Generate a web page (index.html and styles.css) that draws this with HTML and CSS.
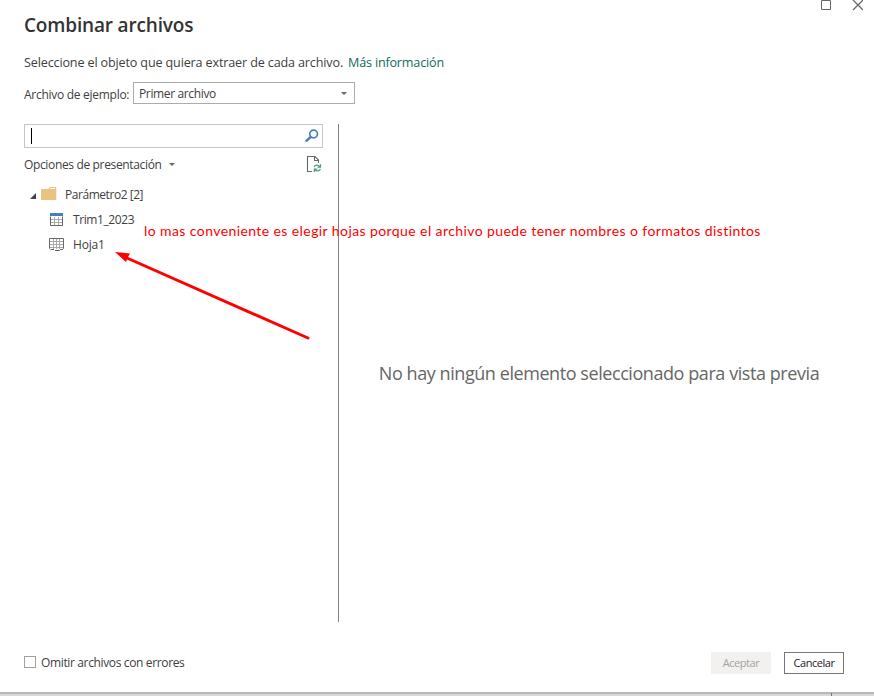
FILE: index.html
```
<!DOCTYPE html>
<html lang="es">
<head>
<meta charset="utf-8">
<title>Combinar archivos</title>
<link rel="stylesheet" href="styles.css">
</head>
<body>
<main class="dialog">
  <div class="window-controls">
    <svg width="42" height="12" viewBox="0 0 42 12" fill="none" stroke="#666">
      <path d="M.5 .5h9v9h-9z"/>
      <path d="M32 0l10 10M42 0L32 10" stroke-width="1.3"/>
    </svg>
  </div>
  <header class="header">
    <h1><span class="t-title">Combinar archivos</span></h1>
    <p class="intro"><span class="t-intro">Seleccione el objeto que quiera extraer de cada archivo.</span><a class="t-link">Más información</a></p>
    <div class="sample">
      <label class="t-label">Archivo de ejemplo:</label>
      <div class="select"><span class="t-select">Primer archivo</span><i class="caret"></i></div>
    </div>
  </header>
  <div class="content">
    <aside class="sidebar">
      <div class="search">
        <i class="cursor"></i>
        <svg width="14" height="14" viewBox="0 0 14 14" fill="none" stroke="#4a7fbd">
          <circle cx="8.6" cy="5" r="3.9" stroke-width="1.7"/>
          <path d="M5.7 8L1.4 11.8" stroke-width="2.4" stroke-linecap="round"/>
        </svg>
      </div>
      <div class="options">
        <span class="t-options">Opciones de presentación</span><i class="caret"></i>
        <svg class="refresh" width="16" height="18" viewBox="0 0 16 18" fill="none">
          <path d="M6 16.5H1.5V1.5H9L12.5 5V8M8.5 1.5V5.5H12.5" stroke="#666" stroke-width="1.1"/>
          <path d="M8.2 12C8.7 9.9 12 9.3 13.7 11.4M14.5 9.2V12H11.5M14.4 13.8C13.7 16.2 10.6 16.6 9 14.6M8.4 17V14.1H11.3" stroke="#4f9c7c" stroke-width="1.25"/>
        </svg>
      </div>
      <div class="node root">
        <svg class="expand" width="6" height="6" viewBox="0 0 6 6"><path d="M6 0v6H0z" fill="#444"/></svg>
        <svg class="folder" width="16" height="14" viewBox="0 0 16 14"><path d="M0 2h7.5L9 0h6v2h.3v11H0z" fill="#eac282"/><path d="M9 2h5V1H9.7z" fill="#fff"/></svg>
        <span class="t-root">Parámetro2 [2]</span>
      </div>
      <div class="node">
        <svg width="15" height="13" viewBox="0 0 15 13" fill="none"><path d="M2 6.5h11M2 9.5h11M5.5 4v8M9.5 4v8" stroke="#aaa"/><path d="M1.5 3.5v9h12v-9" stroke="#666"/><path d="M1 0h13v3H1z" fill="#4580ba"/></svg>
        <span class="t-table">Trim1_2023</span>
      </div>
      <div class="node">
        <svg width="15" height="13" viewBox="0 0 15 13" fill="none"><path d="M1 3.5h13M1 6.5h13M1 9.5h13M4.5 1v10M7.5 1v10M10.5 1v10" stroke="#aaa"/><path d="M1.5 11.5L.5 10.5V.5h14v10l-1 1M2 11.5h3M6 12.5h5M11 11.5h3" stroke="#686868"/></svg>
        <span class="t-sheet">Hoja1</span>
      </div>
    </aside>
    <section class="preview"><span class="t-empty">No hay ningún elemento seleccionado para vista previa</span></section>
  </div>
  <footer class="footer">
    <i class="checkbox"></i><span class="t-check">Omitir archivos con errores</span>
    <div class="actions">
      <div class="button disabled"><span class="t-accept">Aceptar</span></div>
      <div class="button"><span class="t-cancel">Cancelar</span></div>
    </div>
  </footer>
  <div class="edge"><i></i></div>
  <span class="note">lo mas conveniente es elegir hojas porque el archivo puede tener nombres o formatos distintos</span>
  <svg class="arrow" width="200" height="96" viewBox="0 0 200 96"><path d="M12 7L193 87" stroke="#f00" stroke-width="3" stroke-linecap="round"/><path d="M0 1L15 2.5L12.5 7L11 11z" fill="#f00"/></svg>
</main>
</body>
</html>
```
FILE: styles.css
```
* { box-sizing: border-box; }
body { margin: 0; background: #fff; color: #404040; font: 12px/20px "Open Sans", "Noto Sans", sans-serif; }
h1, p { margin: 0; }
span, label, a { white-space: nowrap; }
svg { display: block; flex: none; }
.dialog { position: relative; width: 874px; height: 696px; overflow: hidden; display: flex; flex-direction: column; }
.window-controls { height: 12px; display: flex; justify-content: flex-end; padding-right: 11px; }
.header { height: 112px; padding: 0 24px; }
h1 { font-size: 19px; line-height: 26px; font-weight: 600; color: #333; letter-spacing: -.17px; }
.intro { display: flex; margin-top: 14px; padding-top: 1px; height: 20px; font-size: 12.6px; letter-spacing: -.15px; }
.t-intro { width: 324px; }
.intro a { color: #106b5b; letter-spacing: -.18px; }
.sample { display: flex; align-items: center; height: 22px; margin-top: 10px; }
.sample label { width: 109px; padding-top: 3px; letter-spacing: -.28px; }
.select { width: 222px; height: 22px; border: 1px solid #ababab; display: flex; align-items: center; justify-content: space-between; padding: 0 7px 0 5px; }
.t-select { padding-top: 2px; letter-spacing: -.36px; }
.caret { border: 3px solid transparent; border-top-color: #666; border-bottom: 0; }
.content { height: 498px; padding-left: 24px; display: flex; }
.sidebar { width: 315px; border-right: 1px solid #838383; padding-right: 15px; }
.search { height: 24px; border: 1px solid #c6c6c6; display: flex; align-items: center; justify-content: space-between; padding: 0 3px 0 6px; }
.cursor { width: 1px; height: 16px; background: #000; }
.options { height: 34px; display: flex; align-items: center; }
.t-options { width: 145px; letter-spacing: -.35px; }
.options .caret { margin-top: -2px; }
.refresh { margin: -2px 1px 0 auto; }
.node { height: 25px; display: flex; align-items: center; gap: 9px; padding-left: 25px; }
.root { padding-left: 6px; gap: 5px; }
.root .t-root { margin-left: 3px; letter-spacing: -.45px; }
.t-table { letter-spacing: -.4px; }
.t-sheet { letter-spacing: -.2px; }
.expand { margin-top: 3px; }
.folder { margin-top: -1px; }
.preview { flex: 1; display: flex; align-items: center; justify-content: center; padding-right: 15px; font-size: 18px; color: #666; letter-spacing: -.43px; }
.footer { height: 70px; padding: 30px 30px 0 24px; display: flex; align-items: flex-start; }
.checkbox { width: 12px; height: 12px; border: 1px solid #a0a0a0; margin: 4px 5px 0 0; }
.t-check { margin-top: 1px; letter-spacing: -.36px; }
.actions { margin-left: auto; display: flex; gap: 13px; }
.button { width: 60px; height: 22px; border: 1px solid #777; display: flex; align-items: center; justify-content: center; font-size: 11px; letter-spacing: -.45px; color: #222; }
.disabled { border-color: #f2f1f0; background: #f2f1f0; color: #a3a3a3; }
.edge { height: 4px; background: linear-gradient(#b8b8b8 2px, #d8d8d8 2px); display: flex; justify-content: flex-end; padding-right: 42px; }
.edge i { width: 1px; height: 3px; margin-top: 1px; background: #777; }
.note { position: absolute; left: 144px; top: 221px; color: #f00; font: 14px/20px Lato, sans-serif; letter-spacing: .41px; }
.arrow { position: absolute; left: 115px; top: 251px; }
```
